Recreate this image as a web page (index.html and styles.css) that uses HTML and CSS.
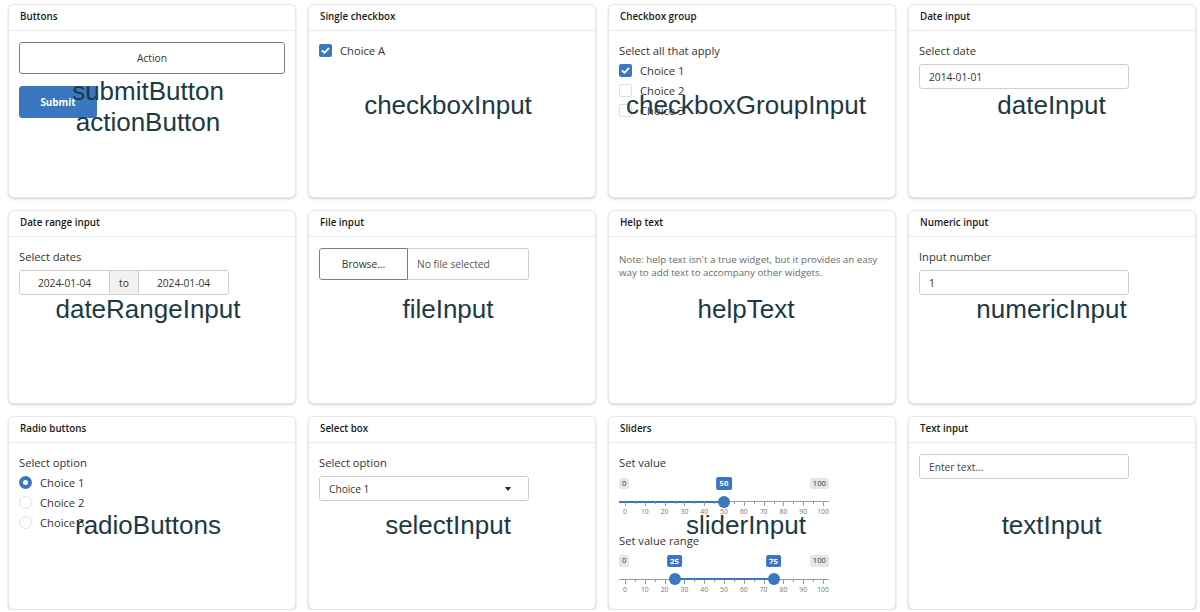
FILE: index.html
```html
<!DOCTYPE html>
<html lang="en">
<head>
<meta charset="utf-8">
<title>Shiny widgets gallery</title>
<link rel="stylesheet" href="styles.css">
</head>
<body>
<main class="grid">

  <section class="card">
    <header class="card-header">Buttons</header>
    <div class="card-body">
      <button class="btn btn-default btn-block">Action</button>
      <button class="btn btn-primary">Submit</button>
    </div>
    <div class="overlay overlay--two">submitButton<br>actionButton</div>
  </section>

  <section class="card">
    <header class="card-header">Single checkbox</header>
    <div class="card-body">
      <div class="check">
        <span class="cb cb--on"><svg viewBox="0 0 13 13" width="13" height="13"><path d="M3.4 6.8 5.5 8.8 9.6 4.4" fill="none" stroke="#fff" stroke-width="1.8" stroke-linecap="round" stroke-linejoin="round"/></svg></span>
        <span>Choice A</span>
      </div>
    </div>
    <div class="overlay">checkboxInput</div>
  </section>

  <section class="card">
    <header class="card-header">Checkbox group</header>
    <div class="card-body">
      <div class="form-label form-label--group">Select all that apply</div>
      <div class="check check--item">
        <span class="cb cb--on"><svg viewBox="0 0 13 13" width="13" height="13"><path d="M3.4 6.8 5.5 8.8 9.6 4.4" fill="none" stroke="#fff" stroke-width="1.8" stroke-linecap="round" stroke-linejoin="round"/></svg></span>
        <span>Choice 1</span>
      </div>
      <div class="check check--item">
        <span class="cb"></span>
        <span>Choice 2</span>
      </div>
      <div class="check check--item">
        <span class="cb"></span>
        <span>Choice 3</span>
      </div>
    </div>
    <div class="overlay">checkboxGroupInput</div>
  </section>

  <section class="card">
    <header class="card-header">Date input</header>
    <div class="card-body">
      <label class="form-label">Select date</label>
      <input class="form-control" type="text" value="2014-01-01">
    </div>
    <div class="overlay">dateInput</div>
  </section>

  <section class="card">
    <header class="card-header">Date range input</header>
    <div class="card-body">
      <label class="form-label">Select dates</label>
      <div class="daterange">
        <input class="daterange-input daterange-input--start" type="text" value="2024-01-04">
        <span class="daterange-addon">to</span>
        <input class="daterange-input daterange-input--end" type="text" value="2024-01-04">
      </div>
    </div>
    <div class="overlay overlay--r2">dateRangeInput</div>
  </section>

  <section class="card">
    <header class="card-header">File input</header>
    <div class="card-body">
      <div class="file-group">
        <span class="file-btn">Browse...</span>
        <span class="file-name">No file selected</span>
      </div>
    </div>
    <div class="overlay overlay--r2">fileInput</div>
  </section>

  <section class="card">
    <header class="card-header">Help text</header>
    <div class="card-body">
      <p class="help-block">Note: help text isn't a true widget, but it provides an easy way to add text to accompany other widgets.</p>
    </div>
    <div class="overlay overlay--r2">helpText</div>
  </section>

  <section class="card">
    <header class="card-header">Numeric input</header>
    <div class="card-body">
      <label class="form-label">Input number</label>
      <input class="form-control form-control--num" type="number" value="1">
    </div>
    <div class="overlay overlay--r2">numericInput</div>
  </section>

  <section class="card">
    <header class="card-header">Radio buttons</header>
    <div class="card-body">
      <div class="form-label form-label--group">Select option</div>
      <div class="check check--item"><span class="rb rb--on"></span><span>Choice 1</span></div>
      <div class="check check--item"><span class="rb"></span><span>Choice 2</span></div>
      <div class="check check--item"><span class="rb"></span><span>Choice 3</span></div>
    </div>
    <div class="overlay overlay--r3">radioButtons</div>
  </section>

  <section class="card">
    <header class="card-header">Select box</header>
    <div class="card-body">
      <label class="form-label">Select option</label>
      <div class="select">
        <span class="select-value">Choice 1</span>
        <span class="select-caret"></span>
      </div>
    </div>
    <div class="overlay overlay--r3">selectInput</div>
  </section>

  <section class="card">
    <header class="card-header">Sliders</header>
    <div class="card-body">
      <div class="form-label form-label--group">Set value</div>
      <div class="irs">
        <span class="irs-min">0</span>
        <span class="irs-max">100</span>
        <span class="irs-line"></span>
        <span class="irs-bar" style="left:0;width:105px"></span>
        <div class="irs-grid">
          <span class="irs-tick" style="left:0%"></span><span class="irs-grid-text" style="left:0%">0</span>
          <span class="irs-tick irs-tick--minor" style="left:5%"></span>
          <span class="irs-tick" style="left:10%"></span><span class="irs-grid-text" style="left:10%">10</span>
          <span class="irs-tick irs-tick--minor" style="left:15%"></span>
          <span class="irs-tick" style="left:20%"></span><span class="irs-grid-text" style="left:20%">20</span>
          <span class="irs-tick irs-tick--minor" style="left:25%"></span>
          <span class="irs-tick" style="left:30%"></span><span class="irs-grid-text" style="left:30%">30</span>
          <span class="irs-tick irs-tick--minor" style="left:35%"></span>
          <span class="irs-tick" style="left:40%"></span><span class="irs-grid-text" style="left:40%">40</span>
          <span class="irs-tick irs-tick--minor" style="left:45%"></span>
          <span class="irs-tick" style="left:50%"></span><span class="irs-grid-text" style="left:50%">50</span>
          <span class="irs-tick irs-tick--minor" style="left:55%"></span>
          <span class="irs-tick" style="left:60%"></span><span class="irs-grid-text" style="left:60%">60</span>
          <span class="irs-tick irs-tick--minor" style="left:65%"></span>
          <span class="irs-tick" style="left:70%"></span><span class="irs-grid-text" style="left:70%">70</span>
          <span class="irs-tick irs-tick--minor" style="left:75%"></span>
          <span class="irs-tick" style="left:80%"></span><span class="irs-grid-text" style="left:80%">80</span>
          <span class="irs-tick irs-tick--minor" style="left:85%"></span>
          <span class="irs-tick" style="left:90%"></span><span class="irs-grid-text" style="left:90%">90</span>
          <span class="irs-tick irs-tick--minor" style="left:95%"></span>
          <span class="irs-tick" style="left:100%"></span><span class="irs-grid-text" style="left:100%">100</span>
        </div>
        <span class="irs-handle" style="left:105px"></span>
        <span class="irs-single" style="left:105px">50</span>
      </div>
      <div class="form-label form-label--group">Set value range</div>
      <div class="irs">
        <span class="irs-min">0</span>
        <span class="irs-max">100</span>
        <span class="irs-line"></span>
        <span class="irs-bar" style="left:55.5px;width:99px"></span>
        <div class="irs-grid">
          <span class="irs-tick" style="left:0%"></span><span class="irs-grid-text" style="left:0%">0</span>
          <span class="irs-tick irs-tick--minor" style="left:5%"></span>
          <span class="irs-tick" style="left:10%"></span><span class="irs-grid-text" style="left:10%">10</span>
          <span class="irs-tick irs-tick--minor" style="left:15%"></span>
          <span class="irs-tick" style="left:20%"></span><span class="irs-grid-text" style="left:20%">20</span>
          <span class="irs-tick irs-tick--minor" style="left:25%"></span>
          <span class="irs-tick" style="left:30%"></span><span class="irs-grid-text" style="left:30%">30</span>
          <span class="irs-tick irs-tick--minor" style="left:35%"></span>
          <span class="irs-tick" style="left:40%"></span><span class="irs-grid-text" style="left:40%">40</span>
          <span class="irs-tick irs-tick--minor" style="left:45%"></span>
          <span class="irs-tick" style="left:50%"></span><span class="irs-grid-text" style="left:50%">50</span>
          <span class="irs-tick irs-tick--minor" style="left:55%"></span>
          <span class="irs-tick" style="left:60%"></span><span class="irs-grid-text" style="left:60%">60</span>
          <span class="irs-tick irs-tick--minor" style="left:65%"></span>
          <span class="irs-tick" style="left:70%"></span><span class="irs-grid-text" style="left:70%">70</span>
          <span class="irs-tick irs-tick--minor" style="left:75%"></span>
          <span class="irs-tick" style="left:80%"></span><span class="irs-grid-text" style="left:80%">80</span>
          <span class="irs-tick irs-tick--minor" style="left:85%"></span>
          <span class="irs-tick" style="left:90%"></span><span class="irs-grid-text" style="left:90%">90</span>
          <span class="irs-tick irs-tick--minor" style="left:95%"></span>
          <span class="irs-tick" style="left:100%"></span><span class="irs-grid-text" style="left:100%">100</span>
        </div>
        <span class="irs-handle" style="left:55.5px"></span>
        <span class="irs-handle" style="left:154.5px"></span>
        <span class="irs-single" style="left:55.5px">25</span>
        <span class="irs-single" style="left:154.5px">75</span>
      </div>
    </div>
    <div class="overlay overlay--r3">sliderInput</div>
  </section>

  <section class="card">
    <header class="card-header">Text input</header>
    <div class="card-body">
      <input class="form-control" type="text" placeholder="Enter text...">
    </div>
    <div class="overlay overlay--r3">textInput</div>
  </section>

</main>
</body>
</html>
```

FILE: styles.css
```css
* {
  box-sizing: border-box;
}

html,
body {
  margin: 0;
  background: #fff;
}

body {
  font-family: "Open Sans", "Liberation Sans", sans-serif;
  font-size: 11.2px;
  color: #333;
}

.grid {
  display: grid;
  grid-template-columns: repeat(4, 288px);
  grid-auto-rows: 194px;
  gap: 12px;
  padding: 4px 4px 0 8px;
}

.card {
  position: relative;
  background: #fff;
  border: 1px solid #e6e6e6;
  border-radius: 6px;
  box-shadow: 0 1px 2px rgba(0, 0, 0, 0.12), 0 2px 4px rgba(0, 0, 0, 0.05);
}

.card-header {
  display: block;
  padding: 5px 11px 6px;
  font-size: 9.8px;
  line-height: 14px;
  font-weight: 600;
  color: #1a1a1a;
  border-bottom: 1px solid #ebebeb;
}

.card-body {
  padding: 11px 10px;
}

/* Buttons */
.btn {
  font-family: "Open Sans", "Liberation Sans", sans-serif;
  font-size: 10.2px;
  height: 32px;
  border-radius: 3px;
  border: 1px solid #7d7d7d;
  background: #fff;
  color: #333;
  padding: 0 10px;
}

.btn-block {
  display: block;
  width: 100%;
}

.btn-primary {
  display: block;
  width: 78px;
  margin-top: 12px;
  background: #3a77bf;
  border-color: #3a77bf;
  color: #fff;
  font-size: 9.9px;
  font-weight: 700;
}

/* Labels */
.form-label {
  display: block;
  line-height: 17px;
  margin-bottom: 5px;
  color: #333;
}

.form-label--group {
  margin-bottom: 3px;
}

/* Checkbox / radio */
.check {
  display: flex;
  align-items: center;
  gap: 8px;
  height: 17px;
  color: #333;
}

.check--item {
  margin-bottom: 3px;
}

.cb {
  display: inline-flex;
  width: 13px;
  height: 13px;
  flex: none;
  border: 1px solid #dedede;
  border-radius: 2px;
  background: #fff;
}

.cb--on {
  border: none;
  background: #3a77bf;
}

.rb {
  display: inline-block;
  width: 13px;
  height: 13px;
  flex: none;
  border: 1px solid #dedede;
  border-radius: 50%;
  background: #fff;
}

.rb--on {
  border: 4px solid #3a77bf;
}

/* Inputs */
.form-control {
  display: block;
  width: 210px;
  height: 25px;
  margin: 0;
  border: 1px solid #cfcfcf;
  border-radius: 3px;
  padding: 0 9px;
  font-family: "Open Sans", "Liberation Sans", sans-serif;
  font-size: 10.2px;
  line-height: 23px;
  color: #333;
  background: #fff;
  outline: none;
}

.form-control::placeholder {
  color: #444;
}

.form-control--num {
  appearance: textfield;
  -moz-appearance: textfield;
}

.form-control--num::-webkit-inner-spin-button,
.form-control--num::-webkit-outer-spin-button {
  -webkit-appearance: none;
  margin: 0;
}

/* Date range */
.daterange {
  display: flex;
  width: 210px;
  height: 25px;
}

.daterange-input {
  width: 91px;
  height: 25px;
  margin: 0;
  border: 1px solid #cfcfcf;
  padding: 0;
  text-align: center;
  font-family: "Open Sans", "Liberation Sans", sans-serif;
  font-size: 10.2px;
  color: #333;
  background: #fff;
  outline: none;
}

.daterange-input--start {
  border-radius: 3px 0 0 3px;
}

.daterange-input--end {
  border-radius: 0 3px 3px 0;
}

.daterange-addon {
  width: 28px;
  display: flex;
  align-items: center;
  justify-content: center;
  background: #f1f1f1;
  border-top: 1px solid #cfcfcf;
  border-bottom: 1px solid #cfcfcf;
  font-size: 10.2px;
  color: #333;
}

/* File input */
.file-group {
  display: flex;
  width: 210px;
  height: 32px;
}

.file-btn {
  width: 89px;
  display: flex;
  align-items: center;
  justify-content: center;
  border: 1px solid #7d7d7d;
  border-radius: 3px 0 0 3px;
  font-size: 10.2px;
  color: #333;
}

.file-name {
  flex: 1;
  display: flex;
  align-items: center;
  padding-left: 9px;
  border: 1px solid #cfcfcf;
  border-left: none;
  border-radius: 0 3px 3px 0;
  font-size: 10.2px;
  color: #555;
}

/* Help text */
.help-block {
  margin: 4.6px 0 0;
  font-size: 9.75px;
  line-height: 13.4px;
  color: #6a6a6a;
}

/* Select */
.select {
  position: relative;
  display: flex;
  align-items: center;
  width: 210px;
  height: 25px;
  border: 1px solid #cfcfcf;
  border-radius: 3px;
  padding: 0 9px;
  font-size: 10.2px;
  color: #333;
}

.select-value {
  flex: 1;
}

.select-caret {
  width: 0;
  height: 0;
  margin-right: 8px;
  border-left: 3.5px solid transparent;
  border-right: 3.5px solid transparent;
  border-top: 4px solid #222;
}

/* Slider */
.irs {
  position: relative;
  width: 210px;
  height: 50px;
  margin-bottom: 7.5px;
}

.irs-min,
.irs-max,
.irs-single {
  position: absolute;
  top: 3.5px;
  height: 11.5px;
  line-height: 11.5px;
  padding: 0 3px;
  border-radius: 2px;
  font-size: 7.7px;
  color: #333;
  background: #e6e6e6;
}

.irs-min {
  left: 0;
}

.irs-max {
  right: 0;
}

.irs-single {
  top: 3px;
  height: 12.5px;
  line-height: 12.5px;
  padding: 0 3.5px;
  transform: translateX(-50%);
  background: #3a77bf;
  color: #fff;
  font-weight: 700;
}

.irs-line {
  position: absolute;
  left: 0;
  right: 0;
  top: 27px;
  height: 1px;
  background: #9a9a9a;
}

.irs-bar {
  position: absolute;
  top: 26.5px;
  height: 2px;
  background: #3a77bf;
}

.irs-grid {
  position: absolute;
  left: 6px;
  right: 6px;
  top: 28px;
  height: 14px;
}

.irs-tick {
  position: absolute;
  top: 0;
  width: 1px;
  height: 4px;
  background: #9a9a9a;
}

.irs-tick--minor {
  height: 2px;
}

.irs-grid-text {
  position: absolute;
  top: 6px;
  line-height: 8px;
  transform: translateX(-50%);
  font-size: 6.8px;
  color: #777;
}

.irs-handle {
  position: absolute;
  top: 21.5px;
  width: 12px;
  height: 12px;
  margin-left: -6px;
  border-radius: 50%;
  background: #3a77bf;
}

/* Overlay function names */
.overlay {
  position: absolute;
  left: 0;
  right: 8px;
  top: 85px;
  text-align: center;
  font-family: "Liberation Sans", Arial, sans-serif;
  font-size: 26px;
  line-height: 30px;
  color: #1b3a46;
  pointer-events: none;
  z-index: 2;
}

.overlay--two {
  top: 70.5px;
  line-height: 31.5px;
}

.overlay--r2 {
  top: 83px;
}

.overlay--r3 {
  top: 92.5px;
}

.card:nth-child(4n+3) .overlay {
  right: 12px;
}

.card:nth-child(4n) .overlay {
  right: 1px;
}
```
